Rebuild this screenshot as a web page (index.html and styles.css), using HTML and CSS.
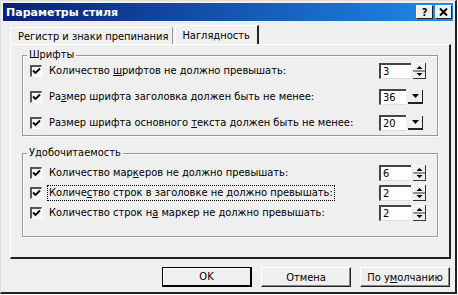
FILE: index.html
```html
<!DOCTYPE html>
<html lang="ru">
<head>
    <meta charset="UTF-8">
    <title>Параметры стиля</title>
    <link rel="stylesheet" href="styles.css">
</head>
<body>
    <div class="window">
        <div class="titlebar">
            <span class="title">Параметры стиля</span>
            <div class="caption-buttons">
                <span class="cap-btn">?</span>
                <span class="cap-btn">
                    <svg width="9" height="8" viewBox="0 0 9 8"><path d="M1 0.5 L8 7.5 M8 0.5 L1 7.5" stroke="#000" stroke-width="2"/></svg>
                </span>
            </div>
        </div>

        <div class="tabs">
            <div class="tab">Регистр и знаки препинания</div>
            <div class="tab active">Наглядность</div>
        </div>

        <div class="panel">
            <fieldset class="group">
                <legend>Шрифты</legend>
                <div class="row">
                    <span class="check"><svg width="9" height="8" viewBox="0 0 9 8"><path d="M1 3.5 L3.5 6 L8 1.5" fill="none" stroke="#000" stroke-width="1.8"/></svg></span>
                    <span class="label">Количество <u>ш</u>рифтов не должно превышать:</span>
                    <span class="control">
                        <span class="spin"><span class="field">3</span><svg class="spin-btn" width="13" height="16" viewBox="0 0 13 16"><rect x="0.5" y="0.5" width="12" height="15" fill="#efefef" stroke="#fff"/><path d="M12.5 0 V16 M0 15.5 H13 M0 8 H13" stroke="#333"/><path d="M3.5 6 H9.5 L6.5 3 Z M3.5 10 H9.5 L6.5 13 Z" fill="#000"/></svg></span>
                    </span>
                </div>
                <div class="row">
                    <span class="check"><svg width="9" height="8" viewBox="0 0 9 8"><path d="M1 3.5 L3.5 6 L8 1.5" fill="none" stroke="#000" stroke-width="1.8"/></svg></span>
                    <span class="label">Ра<u>з</u>мер шрифта заголовка должен быть не менее:</span>
                    <span class="control">
                        <span class="combo"><span class="field">36</span><span class="drop"><svg width="7" height="4" viewBox="0 0 7 4"><path d="M0 0 H7 L3.5 4 Z" fill="#000"/></svg></span></span>
                    </span>
                </div>
                <div class="row">
                    <span class="check"><svg width="9" height="8" viewBox="0 0 9 8"><path d="M1 3.5 L3.5 6 L8 1.5" fill="none" stroke="#000" stroke-width="1.8"/></svg></span>
                    <span class="label">Размер шрифта основного <u>т</u>екста должен быть не менее:</span>
                    <span class="control">
                        <span class="combo"><span class="field">20</span><span class="drop"><svg width="7" height="4" viewBox="0 0 7 4"><path d="M0 0 H7 L3.5 4 Z" fill="#000"/></svg></span></span>
                    </span>
                </div>
            </fieldset>

            <fieldset class="group group-tight">
                <legend>Удобочитаемость</legend>
                <div class="row">
                    <span class="check"><svg width="9" height="8" viewBox="0 0 9 8"><path d="M1 3.5 L3.5 6 L8 1.5" fill="none" stroke="#000" stroke-width="1.8"/></svg></span>
                    <span class="label">Количество мар<u>к</u>еров не должно превышать:</span>
                    <span class="control">
                        <span class="spin"><span class="field">6</span><svg class="spin-btn" width="13" height="16" viewBox="0 0 13 16"><rect x="0.5" y="0.5" width="12" height="15" fill="#efefef" stroke="#fff"/><path d="M12.5 0 V16 M0 15.5 H13 M0 8 H13" stroke="#333"/><path d="M3.5 6 H9.5 L6.5 3 Z M3.5 10 H9.5 L6.5 13 Z" fill="#000"/></svg></span>
                    </span>
                </div>
                <div class="row">
                    <span class="check"><svg width="9" height="8" viewBox="0 0 9 8"><path d="M1 3.5 L3.5 6 L8 1.5" fill="none" stroke="#000" stroke-width="1.8"/></svg></span>
                    <span class="label focus">Количе<u>с</u>тво строк в заголовке не должно превышать:</span>
                    <span class="control">
                        <span class="spin"><span class="field">2</span><svg class="spin-btn" width="13" height="16" viewBox="0 0 13 16"><rect x="0.5" y="0.5" width="12" height="15" fill="#efefef" stroke="#fff"/><path d="M12.5 0 V16 M0 15.5 H13 M0 8 H13" stroke="#333"/><path d="M3.5 6 H9.5 L6.5 3 Z M3.5 10 H9.5 L6.5 13 Z" fill="#000"/></svg></span>
                    </span>
                </div>
                <div class="row">
                    <span class="check"><svg width="9" height="8" viewBox="0 0 9 8"><path d="M1 3.5 L3.5 6 L8 1.5" fill="none" stroke="#000" stroke-width="1.8"/></svg></span>
                    <span class="label">Количество строк н<u>а</u> маркер не должно превышать:</span>
                    <span class="control">
                        <span class="spin"><span class="field">2</span><svg class="spin-btn" width="13" height="16" viewBox="0 0 13 16"><rect x="0.5" y="0.5" width="12" height="15" fill="#efefef" stroke="#fff"/><path d="M12.5 0 V16 M0 15.5 H13 M0 8 H13" stroke="#333"/><path d="M3.5 6 H9.5 L6.5 3 Z M3.5 10 H9.5 L6.5 13 Z" fill="#000"/></svg></span>
                    </span>
                </div>
            </fieldset>
        </div>

        <div class="buttons">
            <button class="btn default">OK</button>
            <button class="btn">Отмена</button>
            <button class="btn">По у<u>м</u>олчанию</button>
        </div>
    </div>
</body>
</html>
```

FILE: styles.css
```css
body {
    margin: 0;
    background: #fff;
    font-family: "DejaVu Sans Condensed", "DejaVu Sans", sans-serif;
    font-stretch: condensed;
    font-size: 11px;
    color: #000;
}
.window {
    width: 457px;
    height: 294px;
    box-sizing: border-box;
    background: #efefef;
    border-left: 1px solid #dcdcdc;
    border-top: 1px solid #dcdcdc;
    border-right: 2px solid #222;
    border-bottom: 2px solid #222;
    padding: 2px 2px 0 2px;
    display: flex;
    flex-direction: column;
}
.titlebar {
    height: 18px;
    flex: none;
    background: linear-gradient(to right, #0a1f78, #1f8ae8);
    display: flex;
    align-items: center;
    justify-content: space-between;
    padding: 0 1px 0 3px;
}
.title {
    color: #fff;
    font-family: "DejaVu Sans", sans-serif;
    font-stretch: normal;
    font-weight: bold;
    font-size: 11px;
}
.caption-buttons {
    display: flex;
    gap: 2px;
}
.cap-btn {
    width: 17px;
    height: 14px;
    box-sizing: border-box;
    background: #efefef;
    border: 1px solid;
    border-color: #fff #222 #222 #fff;
    display: flex;
    align-items: center;
    justify-content: center;
    font-weight: bold;
    font-size: 11px;
    line-height: 1;
}
.tabs {
    display: flex;
    align-items: flex-end;
    height: 19px;
    margin-top: 4px;
    padding-left: 7px;
    flex: none;
}
.tab {
    height: 17px;
    box-sizing: border-box;
    padding: 2px 4px 0 7px;
    border: 1px solid;
    border-color: #fff #999 transparent #fff;
    border-bottom: none;
}
.tab.active {
    height: 19px;
    padding: 3px 7px 0 6px;
    margin-left: 2px;
    border-right: 2px solid #222;
}
.panel {
    height: 215px;
    flex: none;
    box-sizing: border-box;
    margin: 0 2px 0 7px;
    border-left: 1px solid #fff;
    border-top: 1px solid #fff;
    border-right: 2px solid #222;
    border-bottom: 2px solid #222;
    padding: 4px 11px 0 11px;
}
.group {
    margin: 0;
    padding: 1px 10px 4px 7px;
    border: 1px solid #999;
    box-shadow: inset 1px 1px 0 #fff, 1px 1px 0 #fff;
    display: flex;
    flex-direction: column;
    gap: 9px;
}
.group legend {
    padding: 0 2px;
    margin-left: -3px;
    line-height: 12px;
}
.group-tight {
    margin-top: 11px;
    padding-top: 5px;
    padding-bottom: 15px;
    gap: 3px;
}
.row {
    display: flex;
    align-items: center;
    height: 17px;
}
.check {
    width: 12px;
    height: 12px;
    box-sizing: border-box;
    border-top: 2px solid #555;
    border-left: 2px solid #555;
    border-right: 1px solid #fff;
    border-bottom: 1px solid #fff;
    background: #f6f6f6;
    display: flex;
    align-items: center;
    justify-content: center;
    flex: none;
}
.label {
    margin-left: 6px;
    padding: 0 1px;
    line-height: 14px;
    white-space: nowrap;
}
.focus {
    outline: 1px dotted #000;
}
.control {
    margin-left: auto;
    width: 48px;
    display: flex;
}
.spin,
.combo {
    display: flex;
    align-items: center;
    height: 16px;
}
.field {
    width: 32px;
    height: 16px;
    box-sizing: border-box;
    background: #fff;
    border-top: 2px solid #444;
    border-left: 2px solid #444;
    border-bottom: 1px solid #ddd;
    padding-left: 2px;
    line-height: 13px;
}
.spin-btn {
    margin-left: 2px;
}
.combo .field {
    width: 27px;
}
.drop {
    width: 15px;
    height: 14px;
    box-sizing: border-box;
    margin-left: 2px;
    border-right: 1px solid #222;
    border-bottom: 2px solid #222;
    display: flex;
    align-items: center;
    justify-content: center;
}
.buttons {
    display: flex;
    justify-content: flex-end;
    gap: 9px;
    margin-top: 8px;
    padding-right: 3px;
}
.btn {
    width: 90px;
    height: 20px;
    background: #efefef;
    border: 1px solid;
    border-color: #fff #222 #222 #fff;
    box-shadow: inset -1px -1px 0 #888;
    font-family: inherit;
    font-stretch: inherit;
    font-size: 11px;
    padding: 0;
    color: #000;
}
.btn.default {
    border: 1px solid #000;
    border-right-width: 2px;
    border-bottom-width: 2px;
    box-shadow: inset 1px 1px 0 #fff;
}
```
